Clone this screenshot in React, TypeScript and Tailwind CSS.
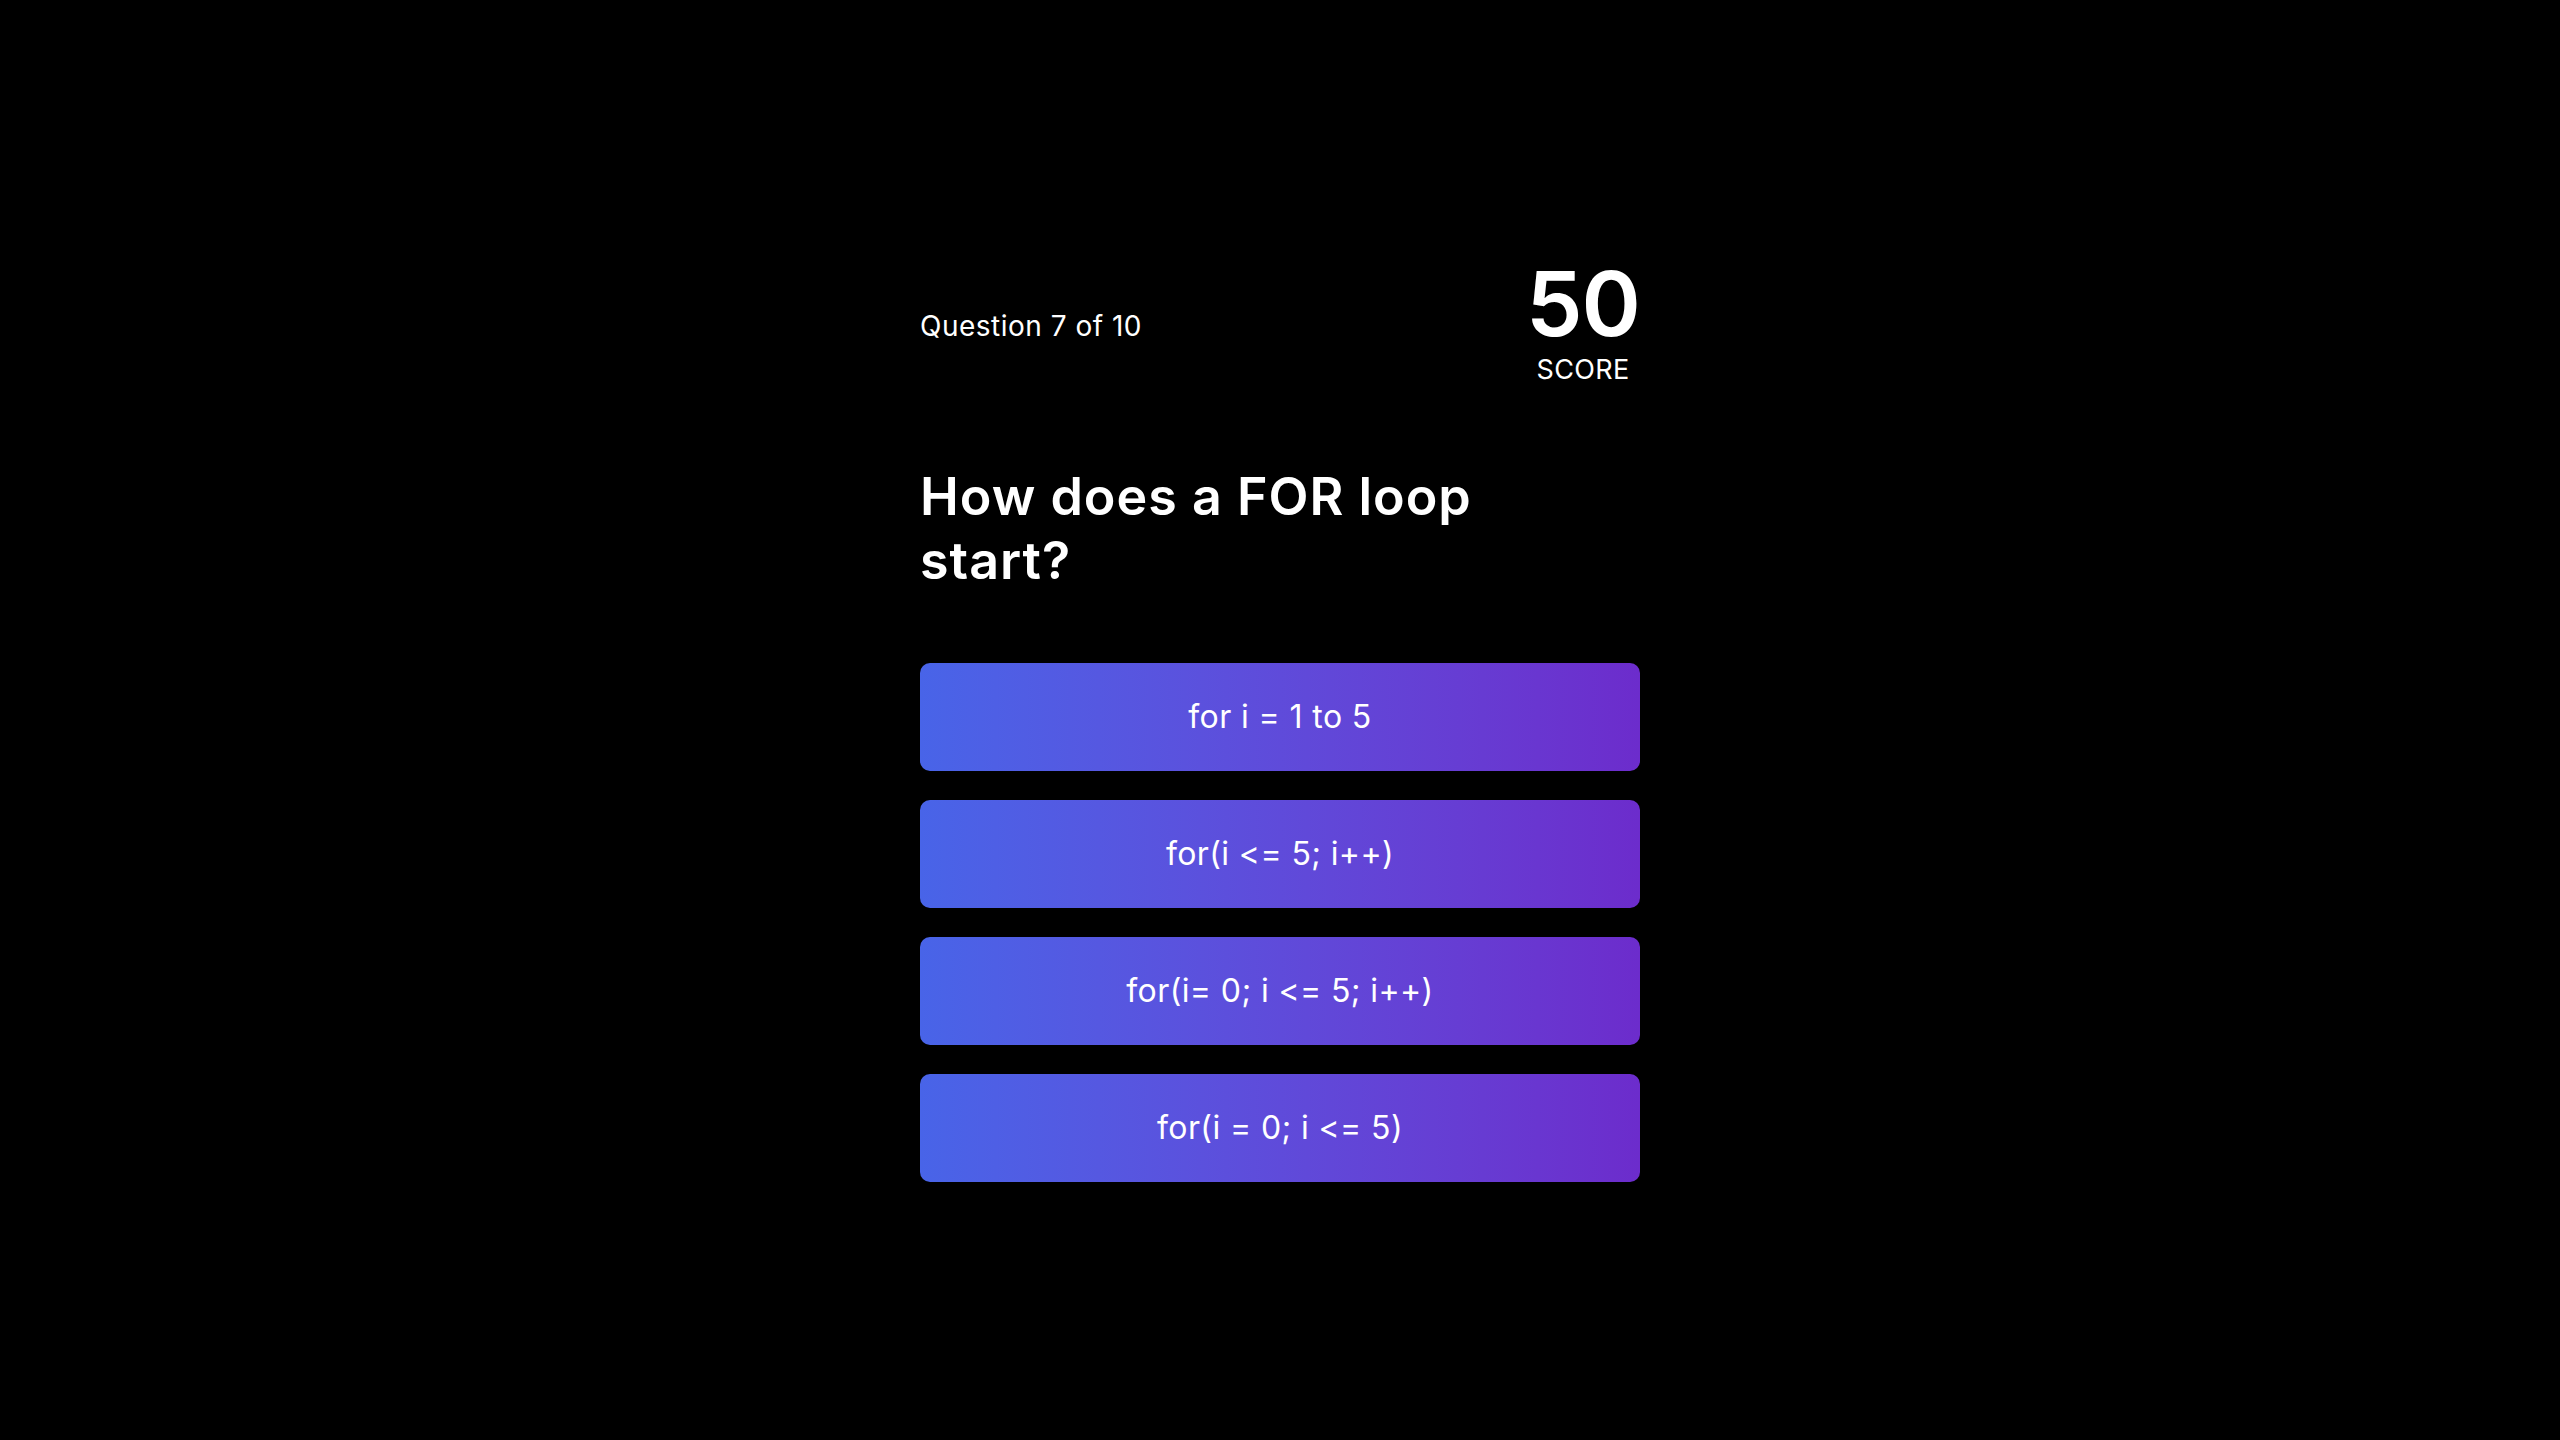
import React from "react";

const answers = [
  "for i = 1 to 5",
  "for(i <= 5; i++)",
  "for(i= 0; i <= 5; i++)",
  "for(i = 0; i <= 5)",
];

export default function App() {
  return (
    <div
      className="min-h-screen w-full bg-black text-white flex items-center justify-center"
      style={{ fontFamily: "Inter, 'Noto Sans', sans-serif" }}
    >
      <div className="w-[720px] flex flex-col">
        <div className="flex items-start justify-between">
          <div className="text-[28px] mt-[46px] tracking-[0.5px]">Question 7 of 10</div>
          <div className="flex flex-col items-center">
            <div className="text-[90px] leading-[90px] font-semibold tracking-[-1px]">50</div>
            <div className="text-[27px] leading-[32px] mt-[5px] tracking-[0.3px]">SCORE</div>
          </div>
        </div>
        <h1 className="mt-[79px] max-w-[620px] text-[52px] leading-[64px] font-semibold tracking-[1px]">
          How does a FOR loop start?
        </h1>
        <div className="mt-[70px] flex flex-col gap-[29px]">
          {answers.map((a) => (
            <button
              key={a}
              className="h-[108px] w-full rounded-[10px] bg-gradient-to-r from-[#4864e8] to-[#6c2ccc] text-[32px] tracking-[0.4px] text-white"
            >
              {a}
            </button>
          ))}
        </div>
      </div>
    </div>
  );
}
